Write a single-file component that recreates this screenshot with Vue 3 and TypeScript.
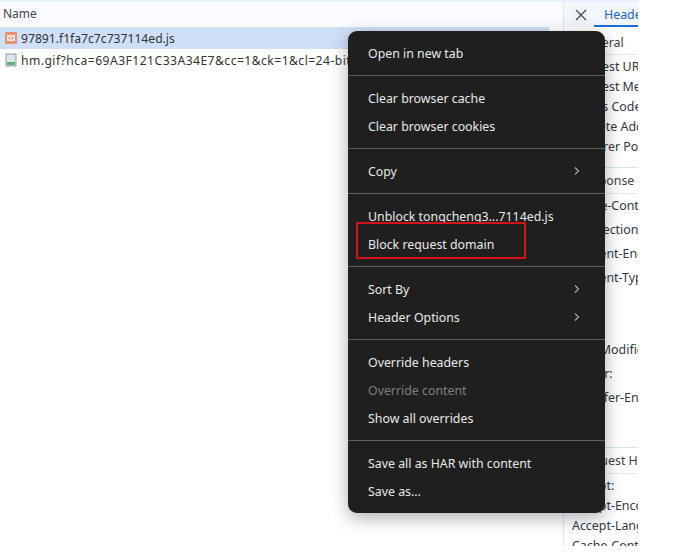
<script setup lang="ts">
interface MenuItem { label: string; arrow?: boolean; disabled?: boolean }
const groups: MenuItem[][] = [
  [{ label: 'Open in new tab' }],
  [{ label: 'Clear browser cache' }, { label: 'Clear browser cookies' }],
  [{ label: 'Copy', arrow: true }],
  [{ label: 'Unblock tongcheng3...7114ed.js' }, { label: 'Block request domain' }],
  [{ label: 'Sort By', arrow: true }, { label: 'Header Options', arrow: true }],
  [{ label: 'Override headers' }, { label: 'Override content', disabled: true }, { label: 'Show all overrides' }],
  [{ label: 'Save all as HAR with content' }, { label: 'Save as...' }],
]
const general = ['Request URL:', 'Request Method:', 'Status Code:', 'Remote Address:', 'Referrer Policy:']
const response = ['Cache-Control:', 'Connection:', 'Content-Encoding:', 'Content-Type:']
const response2 = ['Last-Modified:', 'Server:', 'Transfer-Encoding:']
const request = ['Accept:', 'Accept-Encoding:', 'Accept-Language:', 'Cache-Control:']
</script>

<template>
  <div class="page">
    <div class="devtools">
      <section class="list">
        <div class="name-head">Name</div>
        <div class="row selected">
          <svg class="icon" width="14" height="14" viewBox="0 0 14 14">
            <rect x="1" y="1" width="12" height="12" rx="1" fill="#e8906f" />
            <rect x="3" y="4" width="8" height="6" fill="#fbe9e2" />
            <path d="M6 5.5 4.8 7 6 8.5M8 5.5 9.2 7 8 8.5" fill="none" stroke="#d9653c" stroke-width="0.9" />
          </svg>
          <span>97891.f1fa7c7c737114ed.js</span>
        </div>
        <div class="row">
          <svg class="icon" width="14" height="14" viewBox="0 0 14 14">
            <rect x="2" y="1" width="10" height="12" fill="#dfe7ee" stroke="#8b99a6" stroke-width="1" />
            <rect x="3" y="9" width="8" height="3" fill="#5fae7c" />
          </svg>
          <span class="long">hm.gif?hca=69A3F121C33A34E7&amp;cc=1&amp;ck=1&amp;cl=24-bit</span>
        </div>
      </section>
      <aside class="detail">
        <div class="tabs">
          <svg class="close" width="12" height="12" viewBox="0 0 12 12">
            <path d="M1 1 11 11M11 1 1 11" stroke="#4a4f55" stroke-width="1.4" fill="none" />
          </svg>
          <span class="tab">Headers</span>
        </div>
        <div class="sec-title first">General</div>
        <div class="rows general">
          <div v-for="r in general" :key="r" class="d-row">{{ r }}</div>
        </div>
        <div class="sec-title ruled">Response Headers</div>
        <div class="rows wide">
          <div v-for="r in response" :key="r" class="d-row">{{ r }}</div>
        </div>
        <div class="rows wide later">
          <div v-for="r in response2" :key="r" class="d-row">{{ r }}</div>
        </div>
        <div class="sec-title ruled req">Request Headers</div>
        <div class="rows request">
          <div v-for="r in request" :key="r" class="d-row">{{ r }}</div>
        </div>
      </aside>
    </div>

    <nav class="menu">
      <div v-for="(g, i) in groups" :key="i" class="group">
        <div v-for="it in g" :key="it.label" class="item" :class="{ disabled: it.disabled }">
          <span>{{ it.label }}</span>
          <svg v-if="it.arrow" class="chev" width="6" height="10" viewBox="0 0 6 10">
            <path d="M1 1.5 4.5 5 1 8.5" fill="none" stroke="#a8a8a8" stroke-width="1.2" />
          </svg>
        </div>
      </div>
    </nav>
    <div class="highlight"></div>
  </div>
</template>

<style>
html, body { margin: 0; background: #fff; overflow: hidden; }
</style>

<style scoped>
.page {
  position: relative;
  width: 685px;
  height: 552px;
  overflow: hidden;
  background: #fff;
  font-family: "Noto Sans", "Noto Sans CJK SC", sans-serif;
  font-size: 12px;
  color: #303942;
}
.devtools {
  display: flex;
  width: 638px;
  height: 546px;
  border-top: 2px solid #e8eefa;
  box-sizing: border-box;
  background: #fff;
}
.list {
  width: 563px;
  flex: none;
}
.name-head {
  height: 25px;
  line-height: 24px;
  padding-left: 3px;
  color: #444;
  background: #fafbfe;
}
.row {
  display: flex;
  align-items: center;
  gap: 3px;
  height: 22px;
  width: 549px;
  padding-left: 4px;
  box-sizing: border-box;
  white-space: nowrap;
  color: #333;
  font-size: 12.15px;
}
.row.selected { background: #cfdff8; }
.long { letter-spacing: 0.45px; }
.icon { flex: none; }
.detail {
  width: 75px;
  flex: none;
  border-left: 1px solid #dde5f3;
  box-sizing: border-box;
  overflow: hidden;
  white-space: nowrap;
  font-size: 12.4px;
}
.tabs {
  display: flex;
  align-items: center;
  height: 25px;
  background: #f2f6fd;
  padding-left: 11px;
  gap: 17px;
  box-sizing: border-box;
}
.close { flex: none; }
.tab {
  color: #1a63c9;
  line-height: 25px;
  height: 25px;
  box-shadow: inset 0 -2px 0 #1a6fdc;
  padding: 0 10px;
  margin-left: -10px;
}
.sec-title {
  height: 25px;
  line-height: 26px;
  padding-left: 14px;
  border-bottom: 1px solid #e3e9f4;
  color: #444;
}
.sec-title.first { height: 27px; line-height: 31px; }
.sec-title.ruled { border-top: 1px solid #dbe5f5; }
.sec-title.req { margin-top: 37px; }
.rows.general { padding: 2px 0 10px; }
.rows.request { padding-top: 2px; }
.d-row {
  height: 20px;
  line-height: 20px;
  padding-left: 8px;
}
.rows.wide .d-row { height: 24px; line-height: 24px; }
.rows.later { margin-top: 48px; }
.menu {
  position: absolute;
  left: 348px;
  top: 31px;
  width: 257px;
  background: #1f1f1f;
  border-radius: 9px;
  box-shadow: 0 5px 18px rgba(0, 0, 0, 0.32);
  color: #e8e8e8;
  font-size: 12.35px;
}
.group {
  padding: 8px 0;
  border-bottom: 1px solid #5f5f5f;
}
.group:last-child { border-bottom: 0; }
.item {
  display: flex;
  align-items: center;
  justify-content: space-between;
  height: 28px;
  padding: 0 25px 0 20px;
  box-sizing: border-box;
}
.item.disabled { color: #7d8085; }
.highlight {
  position: absolute;
  left: 356px;
  top: 222px;
  width: 170px;
  height: 37px;
  border: 2px solid #d4121a;
  box-sizing: border-box;
  border-radius: 1px;
}
</style>
